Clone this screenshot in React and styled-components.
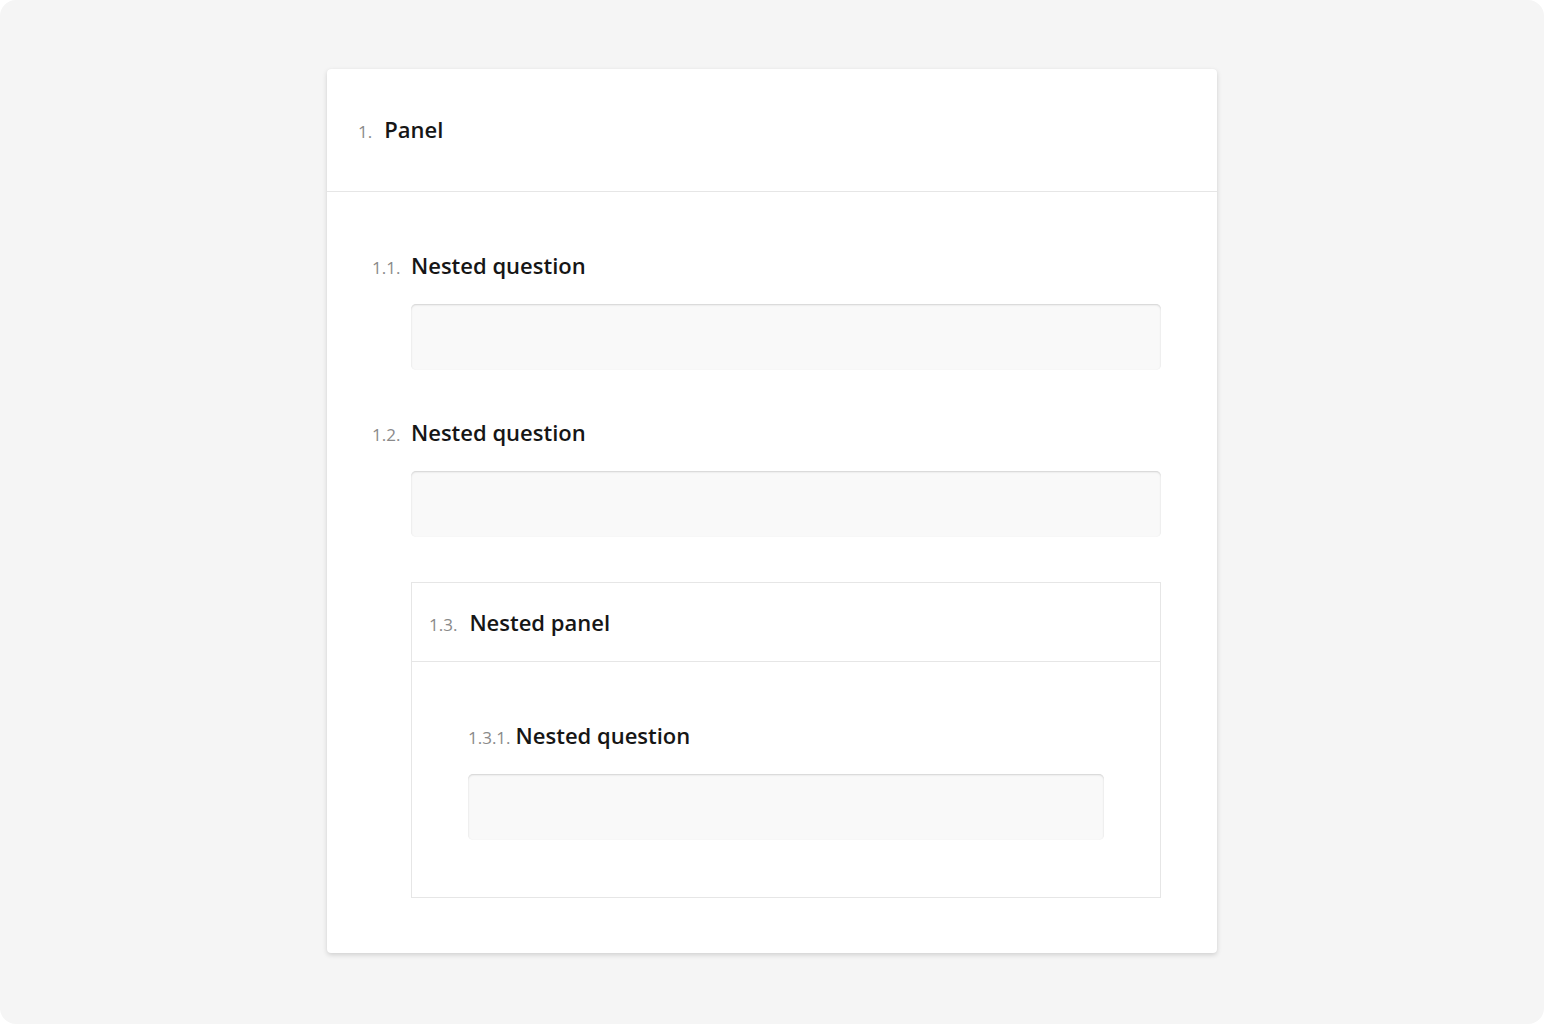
import styled, { createGlobalStyle } from 'styled-components';

const GlobalStyle = createGlobalStyle`
    html, body {
        margin: 0;
        padding: 0;
        background: #ffffff;
        font-family: "Open Sans", "Noto Sans", sans-serif;
    }
`

const Frame = styled.div`
    height: 1024px;
    background-color: #f5f5f5;
    border-radius: 16px;
    display: flex;
    flex-direction: column;
    align-items: center;
    padding-top: 69px;
    box-sizing: border-box;
`

const Panel = styled.div`
    width: 890px;
    background-color: #ffffff;
    border-radius: 4px;
    box-shadow: 0 2px 5px rgba(0, 0, 0, 0.15), 0 0 1px rgba(0, 0, 0, 0.06);
`

const PanelHeader = styled.div`
    display: flex;
    align-items: baseline;
    height: 123px;
    padding: 46px 31px 0;
    box-sizing: border-box;
    border-bottom: 1px solid #e6e6e6;
`

const PanelBody = styled.div`
    display: flex;
    flex-direction: column;
    gap: 48px;
    padding: 59px 56px 55px 84px;
`

const Number = styled.span`
    flex: none;
    font-size: 17px;
    line-height: 28px;
    color: #8a8a8a;
    margin-right: ${props => props.gap || 12}px;
    ${props => props.hang && `
        margin-left: -${props.hang}px;
        width: ${props.hang}px;
        margin-right: 0;
    `}
`

const Title = styled.span`
    font-size: 22px;
    line-height: 28px;
    font-weight: 600;
    color: #161616;
`

const TitleRow = styled.div`
    display: flex;
    align-items: baseline;
    height: 28px;
`

const Question = styled.div`
    display: flex;
    flex-direction: column;
    gap: 25px;
`

const Input = styled.div`
    height: 66px;
    background-color: #f9f9f9;
    border-radius: 5px;
    box-shadow: inset 0 1px 2px rgba(0, 0, 0, 0.16);
`

const NestedPanel = styled.div`
    margin-top: -3px;
    border: 1px solid #e6e6e6;
`

const NestedHeader = styled.div`
    display: flex;
    align-items: baseline;
    height: 79px;
    padding: 25px 17px 0;
    box-sizing: border-box;
    border-bottom: 1px solid #e6e6e6;
`

const NestedBody = styled.div`
    padding: 59px 56px 57px 56px;
`

function App() {
    return (
        <>
            <GlobalStyle />
            <Frame>
                <Panel>
                    <PanelHeader>
                        <Number>1.</Number>
                        <Title>Panel</Title>
                    </PanelHeader>
                    <PanelBody>
                        <Question>
                            <TitleRow>
                                <Number hang={39}>1.1.</Number>
                                <Title>Nested question</Title>
                            </TitleRow>
                            <Input />
                        </Question>
                        <Question>
                            <TitleRow>
                                <Number hang={39}>1.2.</Number>
                                <Title>Nested question</Title>
                            </TitleRow>
                            <Input />
                        </Question>
                        <NestedPanel>
                            <NestedHeader>
                                <Number>1.3.</Number>
                                <Title>Nested panel</Title>
                            </NestedHeader>
                            <NestedBody>
                                <Question>
                                    <TitleRow>
                                        <Number gap={5}>1.3.1.</Number>
                                        <Title>Nested question</Title>
                                    </TitleRow>
                                    <Input />
                                </Question>
                            </NestedBody>
                        </NestedPanel>
                    </PanelBody>
                </Panel>
            </Frame>
        </>
    )
}

export default App;
